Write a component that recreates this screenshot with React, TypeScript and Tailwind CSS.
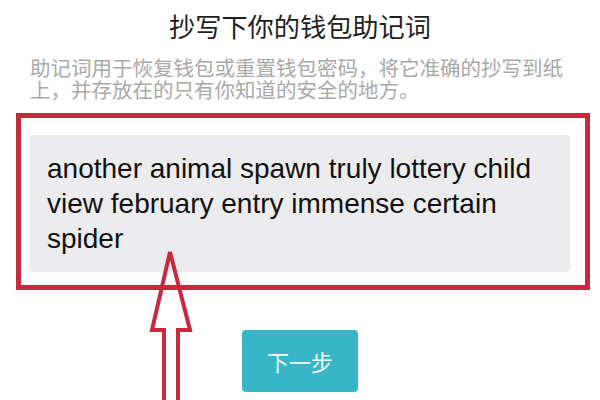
export default function App() {
  return (
    <div className="relative w-[600px] h-[400px] overflow-hidden bg-white font-['Noto_Sans_CJK_SC',sans-serif]">
      <h1 className="pt-[9px] text-center text-[26.2px] leading-[34px] text-[#1e1e1e]">
        抄写下你的钱包助记词
      </h1>
      <p className="mt-[13px] pl-[30px] text-[20.5px] leading-[22px] text-[#a9a9a9] whitespace-nowrap">
        助记词用于恢复钱包或重置钱包密码，将它准确的抄写到纸
        <br />
        上，并存放在的只有你知道的安全的地方。
      </p>

      <div className="ml-[16px] mt-[13px] w-[574px] border-[5px] border-[#c62a3c] pl-[9px] pr-[15px] pt-[17px] pb-[13px]">
        <div className="h-[137px] rounded-[4px] bg-[#ececee] pl-[17px] pr-[10px] pt-[16px] text-[28px] leading-[35px] text-[#111] font-['Liberation_Sans','Noto_Sans_CJK_SC',sans-serif]">
          another animal spawn truly lottery child view february entry immense certain spider
        </div>
      </div>

      <div className="mt-[40px] flex justify-center">
        <button className="flex h-[62px] w-[116px] items-center justify-center rounded-[4px] bg-[#36b6c6] text-[22px] text-[#eefafc]">
          下一步
        </button>
      </div>

      {/* outlined pointer arrow */}
      <svg className="absolute left-0 top-0" width="600" height="400" viewBox="0 0 600 400">
        <polygon
          points="170,252 190,330 178,330 178,404 164,404 164,330 152,330"
          fill="none"
          stroke="#c62a3c"
          strokeWidth="4"
          strokeLinejoin="miter"
        />
      </svg>
    </div>
  );
}
